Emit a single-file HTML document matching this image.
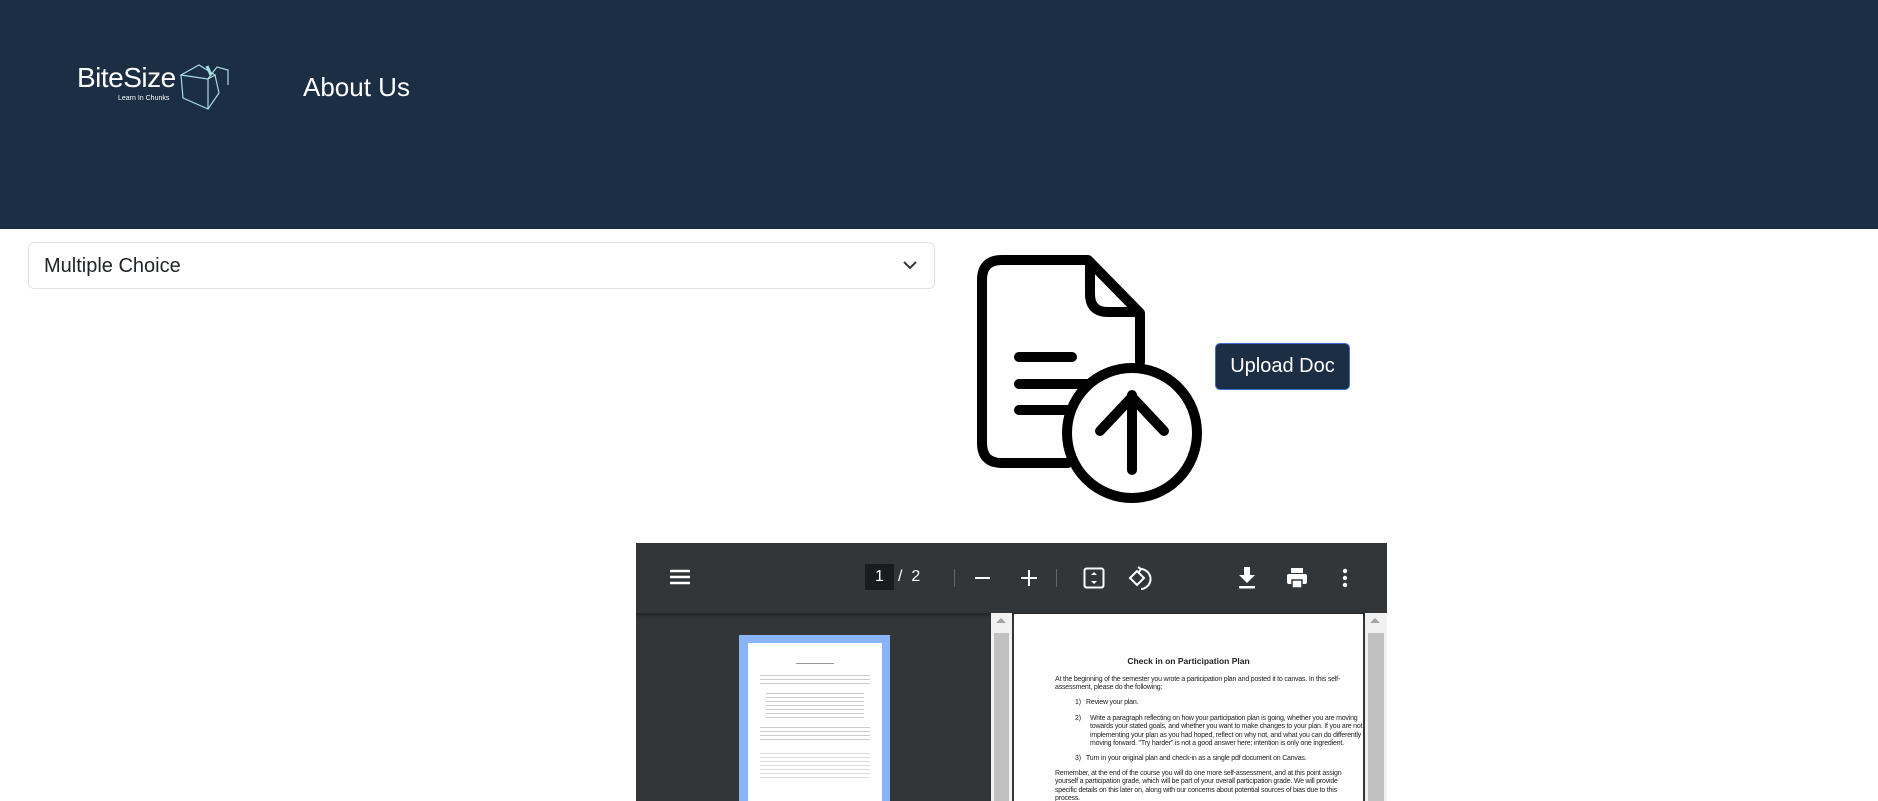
<!DOCTYPE html>
<html><head><meta charset="utf-8"><style>
*{margin:0;padding:0;box-sizing:border-box}
body{width:1878px;height:801px;overflow:hidden;background:#fff;font-family:"Segoe UI","Liberation Sans",sans-serif;position:relative}
.nav{position:absolute;left:0;top:0;width:1878px;height:229px;background:#1b2e44}
.abs{position:absolute}
.sel{left:28px;top:242px;width:907px;height:47px;border:1px solid #dee2e6;border-radius:6px}
.sel span{position:absolute;left:15px;top:12px;font-size:20px;color:#212529}
.btn{left:1215px;top:343px;width:135px;height:47px;background:#1b2e44;border:1px solid #3d6bd0;border-radius:5px;color:#fff;font-size:20px;text-align:center;line-height:44px}
.viewer{left:636px;top:543px;width:751px;height:258px;background:#323639;overflow:hidden}
.tb{left:0;top:0;width:751px;height:70px;background:#323639;box-shadow:0 2px 4px rgba(0,0,0,.4)}
.pdf{font-family:"Liberation Sans",sans-serif;font-size:7px;color:#222;line-height:8.4px;white-space:nowrap;letter-spacing:-0.2px}
</style></head><body>
<div class="nav"></div>
<div class="abs" style="left:77px;top:62px;color:#fff;font-size:28px;letter-spacing:-0.5px">BiteSize</div>
<div class="abs" style="left:118px;top:95px;color:#fff;font-size:7px">Learn In Chunks</div>
<svg class="abs" style="left:178px;top:62px" width="52" height="48" viewBox="0 0 52 48" fill="none" stroke="#a8dce0" stroke-width="1.2">
<path d="M3 13 L21 3 L37 13 L30 17 Z"/><path d="M3 13 L5 36 L30 47 L30 17"/><path d="M30 47 L41 31 L37 13"/><path d="M30 17 L32 14 L39 5 L50 8 L50 23"/><path d="M29 4 L33 13" stroke-width="3"/></svg>
<div class="abs" style="left:303px;top:72px;color:#fff;font-size:26px">About Us</div>
<div class="abs sel"><span>Multiple Choice</span>
<svg class="abs" style="right:16px;top:16px" width="16" height="12" viewBox="0 0 16 12"><path d="M2 3 L8 9 L14 3" stroke="#343a40" stroke-width="2" fill="none"/></svg></div>
<svg class="abs" style="left:960px;top:240px" width="260" height="280" viewBox="960 240 260 280" fill="none" stroke="#000" stroke-width="10" stroke-linecap="round" stroke-linejoin="round">
<path d="M1068 463 H1002 Q982 463 982 443 V280 Q982 260 1002 260 H1088 L1140 313 V362"/>
<path d="M1090 262 V294 Q1090 312 1108 312 H1138"/>
<path d="M1019 357 H1072 M1019 384 H1090 M1019 410 H1068"/>
<circle cx="1132" cy="433" r="65" fill="#fff"/>
<path d="M1132 470 V395 M1100 431 L1132 397 L1164 431"/>
</svg>
<div class="abs btn">Upload Doc</div>
<div class="abs viewer">
 <div class="abs" style="left:0;top:70px;width:355px;height:200px;background:#333639"></div>
 <div class="abs tb">
  <svg class="abs" style="left:33px;top:25px" width="22" height="18"><path d="M1 3H21M1 9H21M1 15H21" stroke="#fff" stroke-width="2.4"/></svg>
  <div class="abs" style="left:229px;top:21px;width:29px;height:26px;background:#191b1c;color:#fff;font-size:16px;text-align:center;line-height:26px">1</div>
  <div class="abs" style="left:262px;top:21px;color:#fff;font-size:16px;line-height:26px">/&nbsp; 2</div>
  <div class="abs" style="left:318px;top:26px;width:1px;height:18px;background:#666"></div>
  <div class="abs" style="left:339px;top:34px;width:15px;height:2px;background:#fff"></div>
  <div class="abs" style="left:385px;top:34px;width:16px;height:2px;background:#fff"></div>
  <div class="abs" style="left:392px;top:27px;width:2px;height:16px;background:#fff"></div>
  <div class="abs" style="left:420px;top:26px;width:1px;height:18px;background:#666"></div>
  <svg class="abs" style="left:447px;top:24px" width="22" height="22"><rect x="1.5" y="1.5" width="19" height="19" rx="2" stroke="#fff" stroke-width="2" fill="none"/><path d="M8 8L11 5L14 8ZM8 14L11 17L14 14Z" fill="#fff"/></svg>
  <svg class="abs" style="left:491px;top:22px" width="26" height="26" fill="none" stroke="#fff" stroke-width="2"><path d="M3 13L10 6L17 13L10 20Z"/><path d="M13 4A10 10 0 0 1 14 24" /><path d="M11 2L14 4L12 7"/></svg>
  <svg class="abs" style="left:601px;top:23px" width="20" height="24"><path d="M7 1H13V9H18L10 17L2 9H7Z" fill="#fff"/><rect x="2" y="20" width="16" height="2.5" fill="#fff"/></svg>
  <svg class="abs" style="left:650px;top:24px" width="22" height="22"><rect x="5" y="1" width="12" height="5" fill="#fff"/><rect x="1" y="7" width="20" height="10" rx="2" fill="#fff"/><rect x="6" y="13" width="10" height="8" fill="#fff" stroke="#323639" stroke-width="1.5"/></svg>
  <svg class="abs" style="left:706px;top:25px" width="6" height="20"><circle cx="3" cy="3" r="2.2" fill="#fff"/><circle cx="3" cy="10" r="2.2" fill="#fff"/><circle cx="3" cy="17" r="2.2" fill="#fff"/></svg>
 </div>
 <div class="abs" style="left:103px;top:92px;width:151px;height:180px;background:#8ab4f8"></div>
 <div class="abs" style="left:112px;top:100px;width:134px;height:170px;background:#fff">
  <div style="margin:20px 0 0 48px;height:1px;background:#999;width:38px"></div>
  <div style="margin:8px 12px 0;height:14px;background:repeating-linear-gradient(#fff 0 3px,#ccc 3px 4px)"></div>
  <div style="margin:4px 18px 0;height:30px;background:repeating-linear-gradient(#fff 0 3px,#ccc 3px 4px)"></div>
  <div style="margin:4px 12px 0;height:16px;background:repeating-linear-gradient(#fff 0 3px,#ccc 3px 4px)"></div>
  <div style="margin:10px 12px 0;height:28px;background:repeating-linear-gradient(#fff 0 3px,#ddd 3px 4px)"></div>
 </div>
 <div class="abs" style="left:355px;top:70px;width:21px;height:200px;background:#f1f1f1"></div>
 <div class="abs" style="left:358px;top:90px;width:15px;height:200px;background:#c1c1c1"></div>
 <div class="abs" style="left:360px;top:75px;width:0;height:0;border-left:5px solid transparent;border-right:5px solid transparent;border-bottom:5px solid #a3a3a3"></div>
 <div class="abs" style="left:729px;top:70px;width:22px;height:200px;background:#f1f1f1"></div>
 <div class="abs" style="left:732px;top:90px;width:16px;height:200px;background:#c1c1c1"></div>
 <div class="abs" style="left:734px;top:75px;width:0;height:0;border-left:5px solid transparent;border-right:5px solid transparent;border-bottom:5px solid #a3a3a3"></div>
 <div class="abs pdf" style="left:378px;top:71px;width:349px;height:200px;background:#fff;overflow:hidden">
  <div style="position:absolute;left:0;width:349px;top:43px;text-align:center;font-weight:bold;font-size:8.5px;letter-spacing:0">Check in on Participation Plan</div>
  <div style="position:absolute;left:41px;top:62px">At the beginning of the semester you wrote a participation plan and posted it to canvas. In this self-<br>assessment, please do the following:</div>
  <div style="position:absolute;left:61px;top:85px">1)&nbsp;&nbsp; Review your plan.</div>
  <div style="position:absolute;left:61px;top:101px">2)</div>
  <div style="position:absolute;left:76px;top:101px">Write a paragraph reflecting on how your participation plan is going, whether you are moving<br>towards your stated goals, and whether you want to make changes to your plan. If you are not<br>implementing your plan as you had hoped, reflect on why not, and what you can do differently<br>moving forward. "Try harder" is not a good answer here; intention is only one ingredient.</div>
  <div style="position:absolute;left:61px;top:141px">3)&nbsp;&nbsp; Turn in your original plan and check-in as a single pdf document on Canvas.</div>
  <div style="position:absolute;left:41px;top:156px">Remember, at the end of the course you will do one more self-assessment, and at this point assign<br>yourself a participation grade, which will be part of your overall participation grade. We will provide<br>specific details on this later on, along with our concerns about potential sources of bias due to this<br>process.</div>
 </div>
</div>
</body></html>
